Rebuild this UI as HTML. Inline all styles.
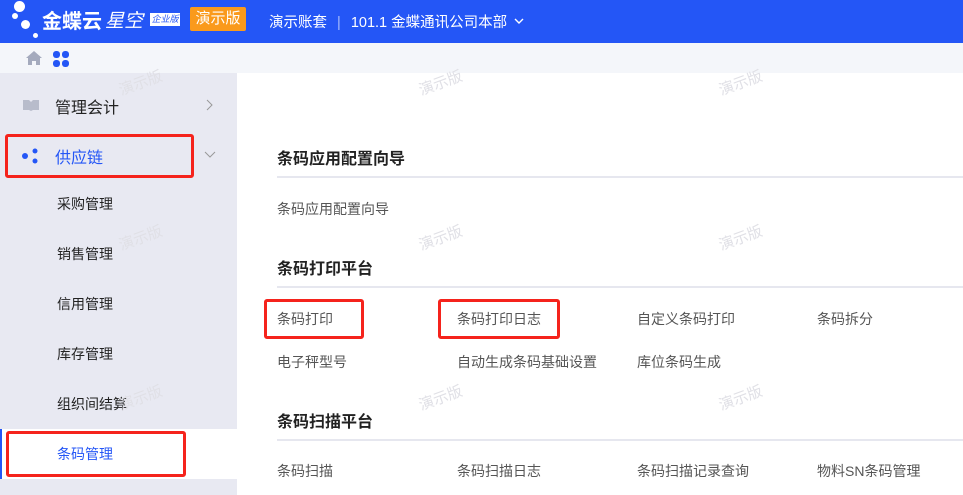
<!DOCTYPE html>
<html><head><meta charset="utf-8"><style>
*{margin:0;padding:0;box-sizing:border-box}
body{width:963px;height:495px;overflow:hidden;position:relative;background:#fff;font-family:"Liberation Sans","Noto Sans CJK SC",sans-serif}
.hdr{position:absolute;left:0;top:0;width:963px;height:43px;background:#2456f6;color:#fff}
.tb{position:absolute;left:0;top:43px;width:963px;height:30px;background:#f4f6fa}
.side{position:absolute;left:0;top:73px;width:237px;height:422px;background:#e8e9f2}
.a{position:absolute;white-space:nowrap}
.rb{position:absolute;border:3px solid #f5231c;border-radius:3px}
.h{position:absolute;font-size:16px;font-weight:bold;color:#222}
.ln{position:absolute;left:277px;width:686px;height:2px;background:#e6e7ef}
.it{position:absolute;font-size:14px;color:#555}
.sub{position:absolute;left:57px;font-size:14px;color:#222}
.wm{position:absolute;font-size:15px;color:#e0e0e6;transform:rotate(-20deg)}
</style></head><body>
<div class="hdr">
<div class="a" style="left:14px;top:1px;width:11px;height:11px;border-radius:50%;background:#fff"></div>
<div class="a" style="left:12px;top:13px;width:6px;height:6px;border-radius:50%;background:#fff"></div>
<div class="a" style="left:21px;top:20px;width:9px;height:9px;border-radius:50%;background:#fff"></div>
<div class="a" style="left:33px;top:33px;width:5px;height:5px;border-radius:50%;background:#fff"></div>
<div class="a" style="left:42px;top:5px;font-size:20px;font-weight:bold">金蝶云</div>
<div class="a" style="left:105px;top:6px;font-size:19px;font-style:italic">星空</div>
<div class="a" style="left:150px;top:13px;width:30px;height:13px;background:#fff;color:#2456f6;font-size:9px;line-height:13px;text-align:center;font-style:italic">企业版</div>
<div class="a" style="left:190px;top:7px;width:56px;height:24px;background:#fa9a1c;border-radius:2px;font-size:15px;line-height:24px;text-align:center">演示版</div>
<div class="a" style="left:269px;top:11px;font-size:14.5px">演示账套 <span style="opacity:.6;margin:0 6px">|</span> 101.1 金蝶通讯公司本部</div>
<svg class="a" style="left:512px;top:14px" width="14" height="14"><path d="M3 5l4 4 4-4" stroke="#fff" stroke-width="1.4" fill="none"/></svg>
</div>
<div class="tb">
<svg class="a" style="left:25px;top:7px" width="18" height="16"><path d="M9 1L1 8h2v7h4v-4h4v4h4V8h2z" fill="#a4aabd"/></svg>
<svg class="a" style="left:53px;top:8px" width="18" height="16"><rect x="0" y="0" width="7" height="7" rx="3" fill="#2456f6"/><rect x="9" y="0" width="7" height="7" rx="3" fill="#2456f6"/><rect x="0" y="9" width="7" height="7" rx="3" fill="#2456f6"/><rect x="9" y="9" width="7" height="7" rx="3" fill="#2456f6"/></svg>
</div>
<div class="side">
<svg class="a" style="left:22px;top:26px" width="18" height="12"><path d="M1 1h6l2 2 2-2h6v10h-6l-2 1-2-1H1z" fill="#b8bccb"/></svg>
<div class="a" style="left:55px;top:21px;font-size:16px;color:#222">管理会计</div>
<svg class="a" style="left:204px;top:25px" width="10" height="14"><path d="M3 2l5 5-5 5" stroke="#999" fill="none"/></svg>
<svg class="a" style="left:22px;top:75px" width="18" height="16"><circle cx="3" cy="8" r="3" fill="#2456f6"/><circle cx="13" cy="3" r="2.5" fill="#2456f6"/><circle cx="13" cy="13" r="2.5" fill="#2456f6"/></svg>
<div class="a" style="left:55px;top:71px;font-size:16px;color:#2456f6">供应链</div>
<svg class="a" style="left:203px;top:76px" width="14" height="10"><path d="M2 3l5 5 5-5" stroke="#999" fill="none"/></svg>
<div class="sub" style="top:121px">采购管理</div>
<div class="sub" style="top:171px">销售管理</div>
<div class="sub" style="top:221px">信用管理</div>
<div class="sub" style="top:271px">库存管理</div>
<div class="sub" style="top:321px">组织间结算</div>
<div class="a" style="left:0;top:356px;width:237px;height:50px;background:#fff;border-left:2px solid #2456f6"></div>
<div class="sub" style="top:371px;color:#2456f6">条码管理</div>
</div>
<div class="wm" style="left:118px;top:72px">演示版</div><div class="wm" style="left:418px;top:72px">演示版</div><div class="wm" style="left:718px;top:72px">演示版</div>
<div class="wm" style="left:118px;top:227px">演示版</div><div class="wm" style="left:418px;top:227px">演示版</div><div class="wm" style="left:718px;top:227px">演示版</div>
<div class="wm" style="left:118px;top:387px">演示版</div><div class="wm" style="left:418px;top:387px">演示版</div><div class="wm" style="left:718px;top:387px">演示版</div>
<div class="h" style="left:277px;top:145px">条码应用配置向导</div><div class="ln" style="top:176px"></div>
<div class="it" style="left:277px;top:199px">条码应用配置向导</div>
<div class="h" style="left:277px;top:255px">条码打印平台</div><div class="ln" style="top:286px"></div>
<div class="it" style="left:277px;top:309px">条码打印</div><div class="it" style="left:457px;top:309px">条码打印日志</div><div class="it" style="left:637px;top:309px">自定义条码打印</div><div class="it" style="left:817px;top:309px">条码拆分</div>
<div class="it" style="left:277px;top:352px">电子秤型号</div><div class="it" style="left:457px;top:352px">自动生成条码基础设置</div><div class="it" style="left:637px;top:352px">库位条码生成</div>
<div class="h" style="left:277px;top:408px">条码扫描平台</div><div class="ln" style="top:439px"></div>
<div class="it" style="left:277px;top:461px">条码扫描</div><div class="it" style="left:457px;top:461px">条码扫描日志</div><div class="it" style="left:637px;top:461px">条码扫描记录查询</div><div class="it" style="left:817px;top:461px">物料SN条码管理</div>
<div class="rb" style="left:5px;top:134px;width:189px;height:44px"></div>
<div class="rb" style="left:6px;top:431px;width:180px;height:46px"></div>
<div class="rb" style="left:264px;top:299px;width:100px;height:40px"></div>
<div class="rb" style="left:438px;top:299px;width:122px;height:40px"></div>
</body></html>
